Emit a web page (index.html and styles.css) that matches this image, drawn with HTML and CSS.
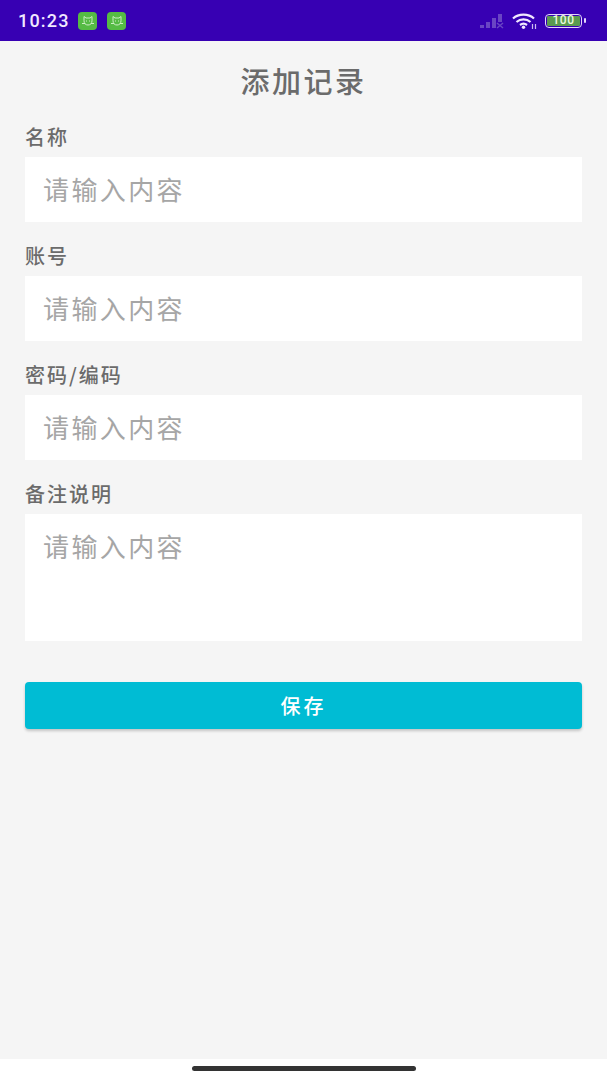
FILE: index.html
```html
<!DOCTYPE html>
<html lang="zh-CN">
<head>
    <meta charset="UTF-8">
    <meta name="viewport" content="width=device-width, initial-scale=1.0">
    <title>添加记录</title>
    <link rel="stylesheet" href="styles.css">
</head>
<body>
    <div class="status_bar">
        <span class="time">10:23</span>
        <span class="app_icon">
            <svg width="14" height="14" viewBox="0 0 14 14" fill="none" stroke="#cdeec4" stroke-width="1"><path d="M3 6.500V2.500L5 4H9L11 2.500V6.500C11 9.500 9.500 11 7 11S3 9.500 3 6.500Z"/><path d="M5 7h1M8 7h1M1 9.500h3M10 9.500h3"/></svg>
        </span>
        <span class="app_icon">
            <svg width="14" height="14" viewBox="0 0 14 14" fill="none" stroke="#cdeec4" stroke-width="1"><path d="M3 6.500V2.500L5 4H9L11 2.500V6.500C11 9.500 9.500 11 7 11S3 9.500 3 6.500Z"/><path d="M5 7h1M8 7h1M1 9.500h3M10 9.500h3"/></svg>
        </span>
        <span class="status_right">
            <svg class="signal" width="24" height="16" viewBox="0 0 24 16" fill="#6a45c4">
                <rect x="0" y="12" width="4" height="3"/>
                <rect x="6" y="9" width="4" height="6"/>
                <rect x="12" y="5" width="4" height="10"/>
                <rect x="18" y="1" width="4" height="8"/>
                <path d="M17 10l6 5M23 10l-6 5" stroke="#6a45c4" stroke-width="1.500"/>
            </svg>
            <svg class="wifi" width="25" height="16" viewBox="0 0 25 16" fill="none" stroke="#f1e8ff" stroke-width="2.200">
                <path d="M1 5.500C6.500 0.300 16.500 0.300 22 5.500"/>
                <path d="M4.500 9C8.500 5.500 14.500 5.500 18.500 9"/>
                <path d="M8 12C10 10.500 13 10.500 15 12"/>
                <circle cx="11.500" cy="14.300" r="1.700" fill="#f1e8ff" stroke="none"/>
                <path d="M20.500 11v5M23.500 11v5" stroke-width="1.200" stroke="#cdbcf0"/>
            </svg>
            <span class="battery"><span class="battery_level">100</span></span>
            <span class="battery_cap"></span>
        </span>
    </div>

    <h1 class="page_title">添加记录</h1>

    <form class="record_form">
        <div class="field">
            <label class="field_label">名称</label>
            <input class="field_input" type="text" placeholder="请输入内容">
        </div>
        <div class="field">
            <label class="field_label">账号</label>
            <input class="field_input" type="text" placeholder="请输入内容">
        </div>
        <div class="field">
            <label class="field_label">密码/编码</label>
            <input class="field_input" type="text" placeholder="请输入内容">
        </div>
        <div class="field">
            <label class="field_label">备注说明</label>
            <textarea class="field_input field_area" placeholder="请输入内容"></textarea>
        </div>
        <button class="save_btn" type="button">保存</button>
    </form>

    <div class="home_bar"><span class="home_handle"></span></div>
</body>
</html>
```

FILE: styles.css
```css
* {
    box-sizing: border-box;
}
body {
    margin: 0;
    height: 1080px;
    overflow: hidden;
    display: flex;
    flex-direction: column;
    background-color: #f5f5f5;
    font-family: "Noto Sans CJK SC", Roboto, sans-serif;
}
.status_bar {
    height: 41px;
    flex: none;
    display: flex;
    align-items: center;
    padding: 0 21px 0 18px;
    background-color: #3700b3;
}
.time {
    width: 60px;
    color: #f1e8ff;
    font-family: Roboto, sans-serif;
    font-size: 18px;
    font-weight: 500;
    letter-spacing: 1.2px;
}
.app_icon {
    width: 19px;
    height: 18px;
    margin-right: 10px;
    display: flex;
    align-items: center;
    justify-content: center;
    background-color: #55bb44;
    border-radius: 4px;
}
.status_right {
    margin-left: auto;
    display: flex;
    align-items: center;
}
.signal {
    margin-right: 8px;
}
.wifi {
    margin-right: 8px;
}
.battery {
    width: 37px;
    height: 14px;
    padding: 1px;
    border: 1.500px solid #e3d6fa;
    border-radius: 4px;
    display: flex;
}
.battery_level {
    flex: 1;
    background-color: #5a9a50;
    border-radius: 1px;
    color: #eaf7dc;
    font-family: Roboto, sans-serif;
    font-size: 12px;
    font-weight: 500;
    line-height: 9px;
    letter-spacing: 0.5px;
    text-align: center;
}
.battery_cap {
    width: 2px;
    height: 5px;
    margin-left: 2px;
    background-color: #e3d6fa;
    border-radius: 1px;
}
.page_title {
    margin: 0;
    height: 80px;
    flex: none;
    color: #6b6b6b;
    font-size: 29px;
    font-weight: 500;
    line-height: 78px;
    letter-spacing: 2.500px;
    text-align: center;
}
.record_form {
    flex: 1;
    padding: 0 25px;
}
.field {
    margin-bottom: 18px;
}
.field_label {
    display: block;
    height: 36px;
    color: #6b6b6b;
    font-size: 20px;
    font-weight: 500;
    line-height: 31px;
    letter-spacing: 2px;
}
.field_input {
    display: block;
    width: 100%;
    height: 65px;
    padding: 0 0 2px 18px;
    border: none;
    border-radius: 0;
    outline: none;
    resize: none;
    background-color: #ffffff;
    font-family: inherit;
    font-size: 26px;
    line-height: 63px;
    letter-spacing: 2.400px;
}
.field_input::placeholder {
    color: #a6a6a6;
    opacity: 1;
}
.field_area {
    height: 127px;
}
.save_btn {
    display: block;
    width: 100%;
    height: 47px;
    margin-top: 41px;
    padding: 0;
    border: none;
    background-color: #00bcd4;
    border-radius: 4px;
    box-shadow: 0 2px 3px rgba(0, 0, 0, 0.2);
    color: #ffffff;
    font-family: inherit;
    font-size: 20px;
    font-weight: 500;
    line-height: 47px;
    letter-spacing: 3px;
    text-align: center;
}
.home_bar {
    height: 21px;
    flex: none;
    background-color: #ffffff;
    padding-top: 7px;
}
.home_handle {
    display: block;
    width: 224px;
    height: 5px;
    margin: 0 auto;
    background-color: #333333;
    border-radius: 3px;
}
```
